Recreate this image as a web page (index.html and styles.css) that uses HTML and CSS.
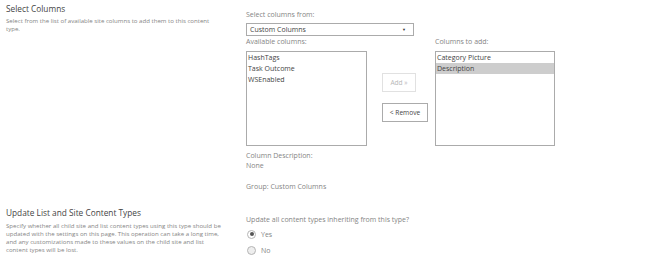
FILE: index.html
```html
<!DOCTYPE html>
<html lang="en">
<head>
    <meta charset="UTF-8">
    <title>Site Content Type Columns</title>
    <link rel="stylesheet" href="styles.css">
</head>
<body>
    <div class="section section-columns">
        <div class="section-info">
            <h3 class="section-title">Select Columns</h3>
            <p class="section-desc">Select from the list of available site columns to add them to this content type.</p>
        </div>

        <div class="section-body">
            <div class="field-label">Select columns from:</div>
            <div class="dropdown">
                <span>Custom Columns</span>
                <span class="dropdown-arrow">&#9660;</span>
            </div>

            <div class="picker">
                <div class="picker-col">
                    <div class="field-label">Available columns:</div>
                    <ul class="listbox listbox-available">
                        <li>HashTags</li>
                        <li>Task Outcome</li>
                        <li>WSEnabled</li>
                    </ul>
                </div>

                <div class="picker-buttons">
                    <button class="btn btn-add" disabled>Add &raquo;</button>
                    <button class="btn btn-remove">&lt; Remove</button>
                </div>

                <div class="picker-col">
                    <div class="field-label">Columns to add:</div>
                    <ul class="listbox listbox-selected">
                        <li>Category Picture</li>
                        <li class="selected">Description</li>
                    </ul>
                </div>
            </div>

            <div class="column-info">
                <div class="field-label">Column Description:</div>
                <div class="field-label">None</div>
                <div class="field-label group-line">Group: Custom Columns</div>
            </div>
        </div>
    </div>

    <div class="section section-update">
        <div class="section-info">
            <h3 class="section-title">Update List and Site Content Types</h3>
            <p class="section-desc">Specify whether all child site and list content types using this type should be updated with the settings on this page. This operation can take a long time, and any customizations made to these values on the child site and list content types will be lost.</p>
        </div>

        <div class="section-body update-body">
            <div class="field-label">Update all content types inheriting from this type?</div>
            <label class="radio">
                <span class="radio-dot checked"></span>
                <span>Yes</span>
            </label>
            <label class="radio">
                <span class="radio-dot"></span>
                <span>No</span>
            </label>
        </div>
    </div>
</body>
</html>
```

FILE: styles.css
```css
:root {
    --title-color: #444;
    --desc-color: #858585;
    --text-color: #444;
    --border: #ababab;
    --border-light: #e1e1e1;
    --selected-bg: #cdcdcd;
}

body {
    font-family: 'Open Sans', 'Noto Sans', sans-serif;
    margin: 0;
    padding: 0 6px;
    background-color: #fff;
    color: var(--text-color);
}

.section {
    display: grid;
    grid-template-columns: 240px 1fr;
}

.section-title {
    margin: 4px 0 0;
    font-size: 8.3px;
    font-weight: 400;
    line-height: 10px;
    color: var(--title-color);
}

.section-desc {
    margin: 3px 0 0;
    width: 212px;
    font-size: 6.1px;
    line-height: 8px;
    color: var(--desc-color);
}

.section-body {
    padding-top: 10px;
}

.field-label {
    font-size: 7px;
    line-height: 10px;
    color: var(--desc-color);
}

.dropdown {
    display: flex;
    justify-content: space-between;
    align-items: center;
    box-sizing: border-box;
    width: 168px;
    height: 13px;
    margin: 3px 0 1px;
    padding: 0 7px 0 3px;
    border: 1px solid var(--border);
    font-size: 7px;
    color: var(--text-color);
}

.dropdown-arrow {
    font-size: 4px;
    color: #333;
}

.picker {
    display: flex;
}

.picker-col .field-label {
    margin-bottom: 4px;
}

.listbox {
    box-sizing: border-box;
    height: 95px;
    margin: 0;
    padding: 0;
    list-style: none;
    border: 1px solid var(--border);
    font-size: 7px;
    color: var(--text-color);
}

.listbox li {
    height: 11px;
    line-height: 11px;
    padding-left: 1px;
}

.listbox li.selected {
    background-color: var(--selected-bg);
}

.listbox-available {
    width: 121px;
}

.listbox-selected {
    width: 120px;
}

.picker-buttons {
    display: flex;
    flex-direction: column;
    align-items: flex-start;
    gap: 11px;
    width: 46px;
    margin: 36px 7px 0 15px;
}

.btn {
    box-sizing: border-box;
    height: 19px;
    padding: 0;
    background: #fff;
    border: 1px solid var(--border);
    font-family: 'Open Sans', 'Noto Sans', sans-serif;
    font-size: 6.6px;
    color: var(--text-color);
}

.btn-add {
    width: 34px;
    border-color: var(--border-light);
    color: #b8b8b8;
}

.btn-remove {
    width: 46px;
}

.column-info {
    margin-top: 5px;
}

.group-line {
    margin-top: 11px;
}

.section-update {
    margin-top: 12px;
}

.section-update .section-desc {
    margin-top: 4px;
    width: 220px;
}

.update-body {
    padding-top: 11px;
}

.update-body .field-label {
    margin-bottom: 1px;
}

.radio {
    display: flex;
    align-items: center;
    gap: 5px;
    height: 16px;
    padding-left: 1px;
    font-size: 7px;
    color: var(--desc-color);
}

.radio-dot {
    position: relative;
    box-sizing: border-box;
    width: 9px;
    height: 9px;
    border: 1px solid #b5b5b5;
    border-radius: 50%;
    background: #eee;
}

.radio-dot.checked {
    background: #fff;
}

.radio-dot.checked::after {
    content: "";
    position: absolute;
    top: 1.5px;
    left: 1.5px;
    width: 4px;
    height: 4px;
    border-radius: 50%;
    background: #555;
}
```
